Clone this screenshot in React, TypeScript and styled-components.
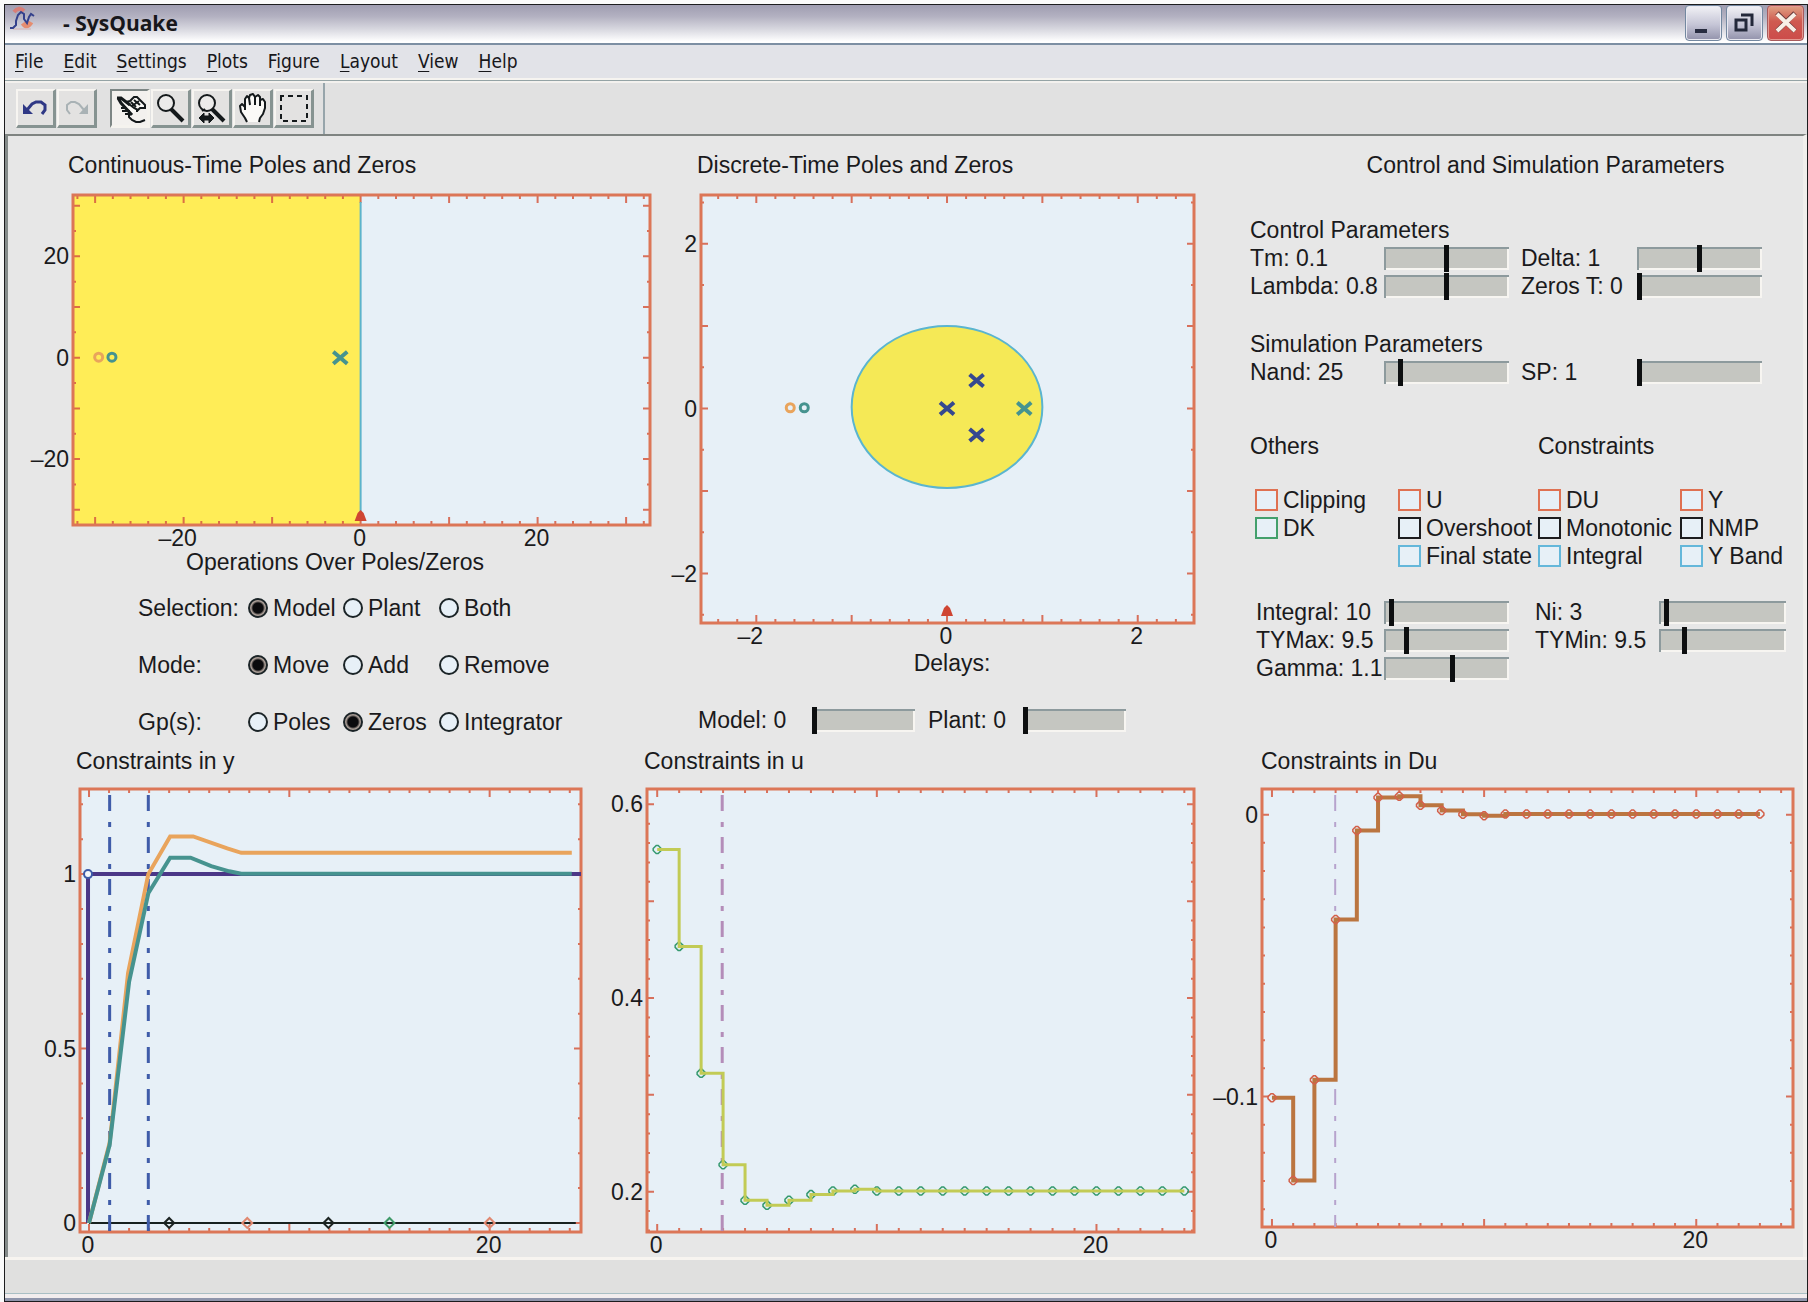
import React from "react";
import styled, { createGlobalStyle, css } from "styled-components";

const color = {
  ink: "#1a1a1c",
  canvas: "#e7e7e7",
  plot: "#e7f0f7",
  frame: "#dc7657",
  tick: "#d65a40",
  teal: "#46938f",
  orange: "#e9a45c",
  navy: "#35488f",
  red: "#cf4532",
};

const GlobalStyle = createGlobalStyle`
  * { box-sizing: border-box; }
  body {
    margin: 0;
    background: #fafafa;
    color: ${color.ink};
    font-family: "Liberation Sans", Arial, sans-serif;
    font-size: 23px;
    line-height: 28px;
  }
`;

/* ---------- window chrome ---------- */

const Window = styled.div`
  display: flex;
  flex-direction: column;
  min-height: calc(100vh - 4px);
  margin: 4px 0 0 4px;
  border: 1px solid #1c1c1e;
  background: ${color.canvas};
`;

const TitleBar = styled.header`
  display: flex;
  align-items: flex-start;
  height: 40px;
  padding: 0 3px 0 4px;
  border-bottom: 2px solid #7d8fa3;
  background: linear-gradient(#9f9db1 0%, #b3b1c1 30%, #d6d6de 62%, #ffffff 96%);
`;

const WindowTitle = styled.h1`
  flex: 1;
  margin: 4px 0 0 28px;
  font: bold 21px/28px "Open Sans", "Noto Sans", sans-serif;
  color: #17171b;
`;

const WindowButtons = styled.div`
  display: flex;
  gap: 4px;
`;

const WindowButton = styled.button<{ $close?: boolean }>`
  display: grid;
  place-items: center;
  width: 37px;
  height: 36px;
  padding: 0;
  border: 1px solid ${(p) => (p.$close ? "#a85a5c" : "#7388a0")};
  border-radius: 4px;
  box-shadow: inset 0 0 0 1px ${(p) => (p.$close ? "#e49a92" : "#e9e9f1")};
  background: ${(p) =>
    p.$close
      ? "linear-gradient(#e0a184, #cf5a50 45%, #cc4c4a)"
      : "linear-gradient(#f2f2f6, #c5c5d6 55%, #9292ab)"};
`;

const MenuBar = styled.nav`
  display: flex;
  gap: 20px;
  height: 38px;
  padding: 2px 10px 0;
  border-bottom: 2px solid #f3f1ee;
  box-shadow: inset 0 -1px #94a3a5, inset 0 -3px #f6f4f0;
  background: #e2e3e8;
`;

const MenuItem = styled.button`
  padding: 0;
  border: 0;
  background: none;
  color: #17171b;
  font: 19px/28px "DejaVu Sans Condensed", "DejaVu Sans", sans-serif;
  align-self: flex-start;

  u { text-underline-offset: 3px; }
`;

const ToolBar = styled.div`
  display: flex;
  align-items: center;
  gap: 13px;
  height: 51px;
  padding-left: 11px;
  background: #e1e1e1;
`;

const ToolGroup = styled.div<{ $divided?: boolean }>`
  display: flex;
  align-items: center;
  align-self: stretch;
  gap: 1px;
  ${(p) => p.$divided && css`
    padding-right: 9px;
    border-right: 2px solid #97a5ab;
  `}
`;

const ToolButton = styled.button<{ $pressed?: boolean }>`
  width: 40px;
  height: 39px;
  padding: 0;
  border: solid;
  border-width: 2px 3px 3px 2px;
  border-color: ${(p) =>
    p.$pressed ? "#7d8684 #f5f3ee #f5f3ee #7d8684" : "#f7f5f1 #869391 #869391 #f7f5f1"};
  background: ${(p) => (p.$pressed ? "#f3f1ee" : "#e3e2e1")};

  svg { display: block; }
`;

const Canvas = styled.main`
  flex: 1;
  padding-top: 15px;
  border-style: solid;
  border-width: 2px 4px 0 3px;
  border-color: #7f8481 #f1efec #f1efec #858b8a;
`;

const StatusBar = styled.footer`
  height: 36px;
  border-top: 3px solid #f7f4f0;
  background: #e0e0df;
`;

const WindowEdge = styled.div`
  height: 8px;
  border-top: 1px solid #a9bfc4;
  border-bottom: 3px solid #8f95ab;
  background: #f2edee;
`;

/* ---------- layout of the figures ---------- */

const UpperRow = styled.div`
  display: grid;
  grid-template-columns: minmax(0, 654fr) minmax(0, 580fr) minmax(0, 561fr);
`;

const LowerRow = styled.div`
  display: grid;
  grid-template-columns: minmax(0, 584fr) minmax(0, 614fr) minmax(0, 597fr);
  margin-top: 11px;
`;

const Title = styled.h2<{ $indent?: number }>`
  margin: 0 0 0 ${(p) => p.$indent ?? 0}px;
  font-size: 23px;
  font-weight: normal;
`;

const CenterTitle = styled(Title)`
  text-align: center;
`;

const Plot = styled.svg`
  display: block;
  width: 100%;
  height: auto;
  overflow: visible;
  font-family: "Liberation Sans", Arial, sans-serif;
  font-size: 23px;
  fill: ${color.ink};
`;

/* ---------- form controls ---------- */

const RadioRows = styled.div`
  display: grid;
  gap: 29px;
  padding: 18px 0 0 130px;
`;

const RadioRow = styled.div`
  display: grid;
  grid-template-columns: 110px 95px 96px 1fr;
  white-space: nowrap;
`;

const RadioOption = styled.label`
  display: flex;
  align-items: center;
  gap: 5px;
`;

const Radio = styled.input`
  appearance: none;
  width: 20px;
  height: 20px;
  margin: 0;
  border: 2px solid #1b2427;
  border-radius: 50%;
  background: ${color.plot};

  &:checked { background: radial-gradient(circle, #0b0b0d 5px, #a89c95 7px); }
`;

const DelayRow = styled.div`
  display: grid;
  grid-template-columns: 114fr 103fr 108fr 103fr 116fr;
  align-items: center;
  padding: 29px 0 0 36px;
`;

const Panel = styled.section`
  padding-left: 8px;
`;

const PanelTitle = styled(CenterTitle)`
  padding-left: 38px;
  margin-bottom: 37px;
`;

const ParamGrid = styled.div<{ $wide?: boolean; $after: number }>`
  display: grid;
  grid-template-columns: ${(p) =>
    p.$wide ? "134fr 125fr 150fr 127fr 17fr" : "134fr 125fr 128fr 125fr 41fr"};
  grid-auto-rows: 28px;
  align-items: center;
  margin-bottom: ${(p) => p.$after}px;
`;

const FieldLabel = styled.label<{ $inset?: number; $col?: number }>`
  padding-left: ${(p) => p.$inset ?? 0}px;
  grid-column: ${(p) => p.$col ?? "auto"};
  white-space: nowrap;
`;

const Range = styled.input`
  appearance: none;
  width: 100%;
  height: 27px;
  margin: 0;
  background: none;

  &::-webkit-slider-runnable-track {
    height: 23px;
    box-shadow: inset 2px 2px #8d9a9d, inset -2px -2px #f7f5f1;
    background: #c5c6c1;
  }
  &::-webkit-slider-thumb {
    appearance: none;
    width: 5px;
    height: 27px;
    margin-top: -2px;
    background: #0d0f10;
  }
`;

const GroupHeads = styled.div`
  display: grid;
  grid-template-columns: 288fr 265fr;
  margin-bottom: 26px;
`;

const CheckGrid = styled.div`
  display: grid;
  grid-template-columns: 143fr 140fr 142fr 123fr;
  grid-auto-rows: 28px;
  padding-left: 5px;
  margin-bottom: 28px;
`;

const CheckOption = styled.label<{ $col: number; $row: number }>`
  grid-column: ${(p) => p.$col};
  grid-row: ${(p) => p.$row};
  display: flex;
  align-items: center;
  gap: 5px;
  white-space: nowrap;
`;

const Check = styled.input<{ $tone: string }>`
  appearance: none;
  flex: none;
  width: 23px;
  height: 22px;
  margin: 0;
  border: 2px solid ${(p) => p.$tone};
  background: ${color.plot};

  &:checked { background: ${(p) => p.$tone}; }
`;

/* ---------- charts ---------- */

type Range2 = [number, number];
type Scale = { x: (v: number) => number; y: (v: number) => number; left: number; right: number; top: number; bottom: number };

interface ChartProps {
  name: string;
  size: [number, number];
  box: [number, number, number, number];
  xDomain: Range2;
  yDomain: Range2;
  xStep: number;
  xMajor: number;
  yStep: number;
  yMajor: number;
  xLabels: number[];
  yLabels: number[];
  shadeNegative?: boolean;
  children: (s: Scale) => React.ReactNode;
}

const format = (v: number) => String(v).replace("-", "–");

const ticksFor = ([lo, hi]: Range2, step: number, major: number) => {
  const list: { v: number; big: boolean }[] = [];
  const every = Math.round(major / step);
  for (let i = Math.ceil(lo / step); i * step <= hi; i++) {
    list.push({ v: i * step, big: i % every === 0 });
  }
  return list;
};

function Chart(p: ChartProps) {
  const [left, top, right, bottom] = p.box;
  const [x0, x1] = p.xDomain;
  const [y0, y1] = p.yDomain;
  const s: Scale = {
    left, top, right, bottom,
    x: (v) => left + ((v - x0) / (x1 - x0)) * (right - left),
    y: (v) => bottom - ((v - y0) / (y1 - y0)) * (bottom - top),
  };
  const tickPath = [
    ...ticksFor(p.xDomain, p.xStep, p.xMajor).map(({ v, big }) => {
      const n = big ? 8 : 4;
      return `M${s.x(v)} ${top}v${n}M${s.x(v)} ${bottom}v${-n}`;
    }),
    ...ticksFor(p.yDomain, p.yStep, p.yMajor).map(({ v, big }) => {
      const n = big ? 7 : 3;
      return `M${left} ${s.y(v)}h${n}M${right} ${s.y(v)}h${-n}`;
    }),
  ].join("");
  return (
    <Plot viewBox={`0 0 ${p.size[0]} ${p.size[1]}`} role="img" aria-label={p.name}>
      <rect x={left} y={top} width={right - left} height={bottom - top} fill={color.plot} />
      {p.shadeNegative && (
        <rect x={left} y={top} width={s.x(0) - left} height={bottom - top} fill="#ffed57" />
      )}
      <path d={tickPath} stroke={color.tick} strokeWidth="2" opacity="0.85" />
      <rect x={left} y={top} width={right - left} height={bottom - top} fill="none" stroke={color.frame} strokeWidth="3" />
      {p.children(s)}
      {p.xLabels.map((v) => (
        <text key={v} x={s.x(v) - (v < 0 ? 6 : 1)} y={bottom + 21} textAnchor="middle">{format(v)}</text>
      ))}
      {p.yLabels.map((v) => (
        <text key={v} x={left - 4} y={s.y(v) + 8} textAnchor="end">{format(v)}</text>
      ))}
    </Plot>
  );
}

const Cross = ({ x, y, tone }: { x: number; y: number; tone: string }) => (
  <path d={`M${x - 7} ${y - 6}L${x + 7} ${y + 6}M${x - 7} ${y + 6}L${x + 7} ${y - 6}`} stroke={tone} strokeWidth="4" />
);

const Ring = ({ x, y, tone }: { x: number; y: number; tone: string }) => (
  <ellipse cx={x} cy={y} rx="4" ry="4" fill="none" stroke={tone} strokeWidth="3" />
);

const Diamond = ({ x, y, tone }: { x: number; y: number; tone: string }) => (
  <path d={`M${x - 5} ${y}L${x} ${y - 5}L${x + 5} ${y}L${x} ${y + 5}Z`} fill="none" stroke={tone} strokeWidth="2" />
);

const Marker = ({ x, y }: { x: number; y: number }) => (
  <path d={`M${x - 6} ${y + 5}L${x - 3} ${y - 3}L${x} ${y - 6}L${x + 3} ${y - 3}L${x + 6} ${y + 5}Z`} fill={color.red} />
);

/* Sampled points of the step curves: a small eight-sided dot outline. */
const Sample = ({ x, y, tone }: { x: number; y: number; tone: string }) => (
  <path
    d={`M${x - 4} ${y - 1}L${x - 1} ${y - 4}H${x + 1}L${x + 4} ${y - 1}V${y + 1}L${x + 1} ${y + 4}H${x - 1}L${x - 4} ${y + 1}Z`}
    stroke={tone}
    strokeWidth="1.5"
  />
);

const DashDot = ({ s, at, tone, width }: { s: Scale; at: number; tone: string; width: number }) => (
  <path d={`M${s.x(at)} ${s.top + 6}V${s.bottom}`} stroke={tone} strokeWidth={width} strokeDasharray="16 11 5 10" />
);

const line = (s: Scale, pts: number[][]) => "M" + pts.map(([x, y]) => `${s.x(x)} ${s.y(y)}`).join("L");

const stairs = (s: Scale, values: number[]) =>
  values.map((v, i) => (i === 0 ? `M${s.x(0)} ${s.y(v)}` : `H${s.x(i)}V${s.y(v)}`)).join("");

const uValues = [0.5533, 0.4533, 0.3222, 0.2278, 0.1911, 0.1859, 0.1911, 0.197, 0.2007, 0.2026, ...Array(15).fill(0.2007)];
const duValues = [-0.1004, -0.1298, -0.0941, -0.0372, -0.0056, 0.0061, 0.0065, 0.0033, 0.0015, 0.0001, -0.0004, ...Array(13).fill(0.0002)];

const modelOutput = [[0, 0], [1.03, 0.224], [2, 0.691], [2.96, 0.945], [4.05, 1.047], [5.07, 1.047], [6.1, 1.023], [7, 1.008], [7.6, 1.001], [24.1, 1.001]];
const plantOutput = [[0, 0], [1.03, 0.23], [1.95, 0.716], [2.96, 1], [4.05, 1.108], [5.2, 1.108], [6.9, 1.074], [7.6, 1.061], [24.1, 1.061]];

/* ---------- drawings on the buttons ---------- */

const AppIcon = () => (
  <svg width="26" height="26" viewBox="0 0 26 26" fill="none">
    <path d="M5 7Q10 1 15 6" stroke="#d87f78" strokeWidth="4" />
    <path d="M14 18Q18 24 22 17" stroke="#e58d70" strokeWidth="5" />
    <path d="M4 24H22" stroke="#d3b3b3" strokeWidth="1" />
    <path d="M1 23H4L7 20V16L9 10L12 7L15 9V14L18 18L20 12L22 9L25 11" stroke="#34418c" strokeWidth="2" />
  </svg>
);

const Undo = () => (
  <svg width="35" height="34" viewBox="0 0 35 34" fill="none">
    <path d="M5 13V23H15Z" fill="#2f3885" />
    <path d="M9 19L14 13L18 11H23L27 14V19L24 23" stroke="#2f3885" strokeWidth="3" />
  </svg>
);

const Redo = () => (
  <svg width="35" height="34" viewBox="0 0 35 34" fill="none">
    <path d="M29 13V23H20Z" fill="#a9b2b5" />
    <path d="M25 19L20 13L16 11H12L8 14V19L11 23" stroke="#a9b2b5" strokeWidth="2" />
  </svg>
);

const Pointing = () => (
  <svg width="35" height="34" viewBox="0 0 35 34" fill="none" stroke="#14191b" strokeWidth="2">
    <path d="M5 6L10 7L16 12L22 7L27 8L33 14V17H29L25 21L23 20L20 25L8 12Z" fill="#fbfaf7" stroke="none" />
    <path d="M5 7H9L18 14M6 7L9 12L20 24" strokeWidth="3" />
    <path d="M14 11L18 10L22 6H25L28 9L33 14V17H28L26 19L22 17L17 13" />
    <path d="M19 11L24 16M22 9L28 14M20 15L27 10" />
    <path d="M9 17H13M10 20H18M13 23H17V26L20 29L24 31H28L33 29" />
    <path d="M25 19V21" />
  </svg>
);

const Magnifier = ({ arrows }: { arrows?: boolean }) => (
  <svg width="35" height="34" viewBox="0 0 35 34" fill="none" stroke="#14191b">
    <circle cx="13" cy="12" r="8" strokeWidth="2" fill="#ecebea" />
    <path d="M18 18L30 30" strokeWidth="4" />
    {arrows && <path d="M5 27L10 22V25H15V22L20 27L15 32V29H10V32Z" fill="#14191b" />}
    {arrows && <path d="M8 20L11 18" strokeWidth="2" />}
  </svg>
);

const OpenHand = () => (
  <svg width="35" height="34" viewBox="0 0 35 34" fill="none" stroke="#14191b" strokeWidth="2" strokeLinejoin="round">
    <path
      d="M12 31L10 27L6 21L5 15L7 13L10 16V8L12 5L14 7L15 4L18 3L20 6L23 4L25 6V9L28 8L30 11V17L28 23L25 27L24 31"
      fill="#fbfaf7"
    />
    <path d="M14 7L15 14M20 6V14M25 9V15M10 16V19" />
  </svg>
);

const Marquee = () => (
  <svg width="35" height="34" viewBox="0 0 35 34" fill="none" stroke="#14191b" strokeWidth="2">
    <rect x="5" y="5" width="26" height="25" strokeDasharray="5 4" strokeDashoffset="2" />
  </svg>
);

/* ---------- data of the menus and forms ---------- */

const menus: [string, string, string][] = [
  ["", "F", "ile"], ["", "E", "dit"], ["", "S", "ettings"], ["", "P", "lots"],
  ["F", "i", "gure"], ["", "L", "ayout"], ["", "V", "iew"], ["", "H", "elp"],
];

const radioGroups = [
  { label: "Selection:", options: ["Model", "Plant", "Both"], on: 0 },
  { label: "Mode:", options: ["Move", "Add", "Remove"], on: 0 },
  { label: "Gp(s):", options: ["Poles", "Zeros", "Integrator"], on: 1 },
];

const checks = [
  { label: "Clipping", tone: "#df7152", col: 1, row: 1 },
  { label: "U", tone: "#df7152", col: 2, row: 1 },
  { label: "DU", tone: "#df7152", col: 3, row: 1 },
  { label: "Y", tone: "#df7152", col: 4, row: 1 },
  { label: "DK", tone: "#43a06c", col: 1, row: 2 },
  { label: "Overshoot", tone: "#1c1c1e", col: 2, row: 2 },
  { label: "Monotonic", tone: "#1c1c1e", col: 3, row: 2 },
  { label: "NMP", tone: "#1c1c1e", col: 4, row: 2 },
  { label: "Final state", tone: "#64b7da", col: 2, row: 3 },
  { label: "Integral", tone: "#64b7da", col: 3, row: 3 },
  { label: "Y Band", tone: "#64b7da", col: 4, row: 3 },
];

function Slider({ id, label, at, inset, col }: { id: string; label: string; at: number; inset?: number; col?: number }) {
  return (
    <>
      <FieldLabel htmlFor={id} $inset={inset} $col={col}>{label}</FieldLabel>
      <Range id={id} type="range" min={0} max={100} defaultValue={at} />
    </>
  );
}

export default function App() {
  return (
    <>
      <GlobalStyle />
      <Window>
        <TitleBar>
          <AppIcon />
          <WindowTitle>- SysQuake</WindowTitle>
          <WindowButtons>
            <WindowButton aria-label="Minimize">
              <svg width="24" height="24" viewBox="0 0 24 24"><path d="M3 18H15V22H3Z" fill="#282c40" /></svg>
            </WindowButton>
            <WindowButton aria-label="Restore">
              <svg width="24" height="24" viewBox="0 0 24 24" fill="none" stroke="#23283a" strokeWidth="3">
                <path d="M3 9H13V19H3Z M8 4H19V15" />
              </svg>
            </WindowButton>
            <WindowButton $close aria-label="Close">
              <svg width="26" height="26" viewBox="0 0 26 26">
                <path d="M4 3L22 21M22 3L4 21" stroke="#6b3a3a" strokeWidth="5" />
                <path d="M4 4L22 21M22 4L4 21" stroke="#f8efe6" strokeWidth="4" />
              </svg>
            </WindowButton>
          </WindowButtons>
        </TitleBar>

        <MenuBar aria-label="Main menu">
          {menus.map(([before, key, after]) => (
            <MenuItem key={before + key + after}>{before}<u>{key}</u>{after}</MenuItem>
          ))}
        </MenuBar>

        <ToolBar>
          <ToolGroup>
            <ToolButton aria-label="Undo"><Undo /></ToolButton>
            <ToolButton aria-label="Redo"><Redo /></ToolButton>
          </ToolGroup>
          <ToolGroup $divided>
            <ToolButton $pressed aria-label="Manipulate"><Pointing /></ToolButton>
            <ToolButton aria-label="Zoom"><Magnifier /></ToolButton>
            <ToolButton aria-label="Zoom horizontally"><Magnifier arrows /></ToolButton>
            <ToolButton aria-label="Drag"><OpenHand /></ToolButton>
            <ToolButton aria-label="Select area"><Marquee /></ToolButton>
          </ToolGroup>
        </ToolBar>

        <Canvas>
          <UpperRow>
            <section>
              <Title $indent={60}>Continuous-Time Poles and Zeros</Title>
              <Chart
                name="Continuous-Time Poles and Zeros" size={[654, 369]} box={[65, 16, 642, 346]}
                xDomain={[-32.5, 32.7]} yDomain={[-33, 32.1]}
                xStep={2} xMajor={10} yStep={5} yMajor={10}
                xLabels={[-20, 0, 20]} yLabels={[20, 0, -20]}
                shadeNegative
              >
                {(s) => (
                  <>
                    <path d={`M${s.x(0)} ${s.top + 7}V${s.bottom - 8}`} stroke="#5db4cb" strokeWidth="2" />
                    <Marker x={s.x(0)} y={s.bottom - 9} />
                    <Ring x={s.x(-29.6)} y={s.y(0.1)} tone={color.orange} />
                    <Ring x={s.x(-28.1)} y={s.y(0.1)} tone={color.teal} />
                    <Cross x={s.x(-2.3)} y={s.y(0)} tone={color.teal} />
                  </>
                )}
              </Chart>
              <CenterTitle>Operations Over Poles/Zeros</CenterTitle>
              <RadioRows>
                {radioGroups.map((g) => (
                  <RadioRow key={g.label} role="radiogroup" aria-label={g.label}>
                    <span>{g.label}</span>
                    {g.options.map((o, i) => (
                      <RadioOption key={o}>
                        <Radio type="radio" name={g.label} defaultChecked={i === g.on} />
                        {o}
                      </RadioOption>
                    ))}
                  </RadioRow>
                ))}
              </RadioRows>
            </section>

            <section>
              <Title $indent={35}>Discrete-Time Poles and Zeros</Title>
              <Chart
                name="Discrete-Time Poles and Zeros" size={[580, 470]} box={[39, 16, 532, 444]}
                xDomain={[-2.58, 2.59]} yDomain={[-2.6, 2.59]}
                xStep={0.2} xMajor={1} yStep={0.5} yMajor={1}
                xLabels={[-2, 0, 2]} yLabels={[2, 0, -2]}
              >
                {(s) => (
                  <>
                    <ellipse cx={s.x(0)} cy={s.y(0.02)} rx={s.x(1) - s.x(0)} ry={81} fill="#f5e956" stroke="#5bb5cf" strokeWidth="2" />
                    <Marker x={s.x(0)} y={s.bottom - 12} />
                    <Ring x={s.x(-1.644)} y={s.y(0.01)} tone={color.orange} />
                    <Ring x={s.x(-1.497)} y={s.y(0.01)} tone={color.teal} />
                    <Cross x={s.x(0)} y={s.y(0)} tone={color.navy} />
                    <Cross x={s.x(0.31)} y={s.y(0.34)} tone={color.navy} />
                    <Cross x={s.x(0.31)} y={s.y(-0.32)} tone={color.navy} />
                    <Cross x={s.x(0.81)} y={s.y(0)} tone={color.teal} />
                  </>
                )}
              </Chart>
              <CenterTitle>Delays:</CenterTitle>
              <DelayRow>
                <Slider id="delay-model" label="Model: 0" at={0} />
                <Slider id="delay-plant" label="Plant: 0" at={0} inset={13} />
              </DelayRow>
            </section>

            <Panel>
              <PanelTitle>Control and Simulation Parameters</PanelTitle>
              <Title>Control Parameters</Title>
              <ParamGrid $after={30}>
                <Slider id="tm" label="Tm: 0.1" at={50} />
                <Slider id="delta" label="Delta: 1" at={50} inset={12} />
                <Slider id="lambda" label="Lambda: 0.8" at={50} col={1} />
                <Slider id="zeros-t" label="Zeros T: 0" at={0} inset={12} />
              </ParamGrid>
              <Title>Simulation Parameters</Title>
              <ParamGrid $after={46}>
                <Slider id="nand" label="Nand: 25" at={12} />
                <Slider id="sp" label="SP: 1" at={0} inset={12} />
              </ParamGrid>
              <GroupHeads>
                <Title>Others</Title>
                <Title>Constraints</Title>
              </GroupHeads>
              <CheckGrid>
                {checks.map((c) => (
                  <CheckOption key={c.label} $col={c.col} $row={c.row}>
                    <Check type="checkbox" $tone={c.tone} />
                    {c.label}
                  </CheckOption>
                ))}
              </CheckGrid>
              <ParamGrid $wide $after={0}>
                <Slider id="integral" label="Integral: 10" at={4} inset={6} />
                <Slider id="ni" label="Ni: 3" at={4} inset={26} />
                <Slider id="tymax" label="TYMax: 9.5" at={17} inset={6} col={1} />
                <Slider id="tymin" label="TYMin: 9.5" at={19} inset={26} />
                <Slider id="gamma" label="Gamma: 1.1" at={55} inset={6} col={1} />
              </ParamGrid>
            </Panel>
          </UpperRow>

          <LowerRow>
            <section>
              <Title $indent={68}>Constraints in y</Title>
              <Chart
                name="Constraints in y" size={[584, 482]} box={[72, 14, 573, 457]}
                xDomain={[-0.45, 24.56]} yDomain={[-0.026, 1.244]}
                xStep={1} xMajor={10} yStep={0.1} yMajor={0.5}
                xLabels={[0, 20]} yLabels={[1, 0.5, 0]}
              >
                {(s) => (
                  <g fill="none">
                    <path d={`M${s.x(0) - 1} ${s.y(0)}V${s.y(1)}H${s.right}`} stroke="#4b3787" strokeWidth="4" />
                    <circle cx={s.x(0) - 1} cy={s.y(1)} r="4" fill="#f3f6fa" stroke="#3d5aa8" strokeWidth="2" />
                    <path d={`M${s.x(0)} ${s.y(0)}H${s.x(24.3)}`} stroke="#17211f" strokeWidth="2" />
                    <DashDot s={s} at={1.03} tone="#3f5ca9" width={3} />
                    <DashDot s={s} at={2.96} tone="#3f5ca9" width={3} />
                    <path d={line(s, plantOutput)} stroke={color.orange} strokeWidth="4" />
                    <path d={line(s, modelOutput)} stroke={color.teal} strokeWidth="4" />
                    <Diamond x={s.x(4)} y={s.y(0)} tone="#1c2422" />
                    <Diamond x={s.x(7.9)} y={s.y(0)} tone="#e08870" />
                    <Diamond x={s.x(11.95)} y={s.y(0)} tone="#1c2422" />
                    <Diamond x={s.x(15)} y={s.y(0)} tone="#3f9a68" />
                    <Diamond x={s.x(20)} y={s.y(0)} tone="#e08870" />
                  </g>
                )}
              </Chart>
            </section>
            <section>
              <Title $indent={52}>Constraints in u</Title>
              <Chart
                name="Constraints in u" size={[614, 482]} box={[55, 14, 602, 457]}
                xDomain={[-0.464, 24.44]} yDomain={[0.1584, 0.6158]}
                xStep={1} xMajor={10} yStep={0.02} yMajor={0.1}
                xLabels={[0, 20]} yLabels={[0.6, 0.4, 0.2]}
              >
                {(s) => (
                  <g fill="none">
                    <DashDot s={s} at={2.96} tone="#b48db9" width={3} />
                    {uValues.map((v, i) => (
                      <Sample key={i} x={s.x(i)} y={s.y(v)} tone="#35996f" />
                    ))}
                    <path d={stairs(s, uValues)} stroke="#c2cb55" strokeWidth="3" />
                  </g>
                )}
              </Chart>
            </section>
            <section>
              <Title $indent={55}>Constraints in Du</Title>
              <Chart
                name="Constraints in Du" size={[597, 482]} box={[56, 14, 587, 452]}
                xDomain={[-0.47, 24.56]} yDomain={[-0.1463, 0.0091]}
                xStep={1} xMajor={10} yStep={0.01} yMajor={0.1}
                xLabels={[0, 20]} yLabels={[0, -0.1]}
              >
                {(s) => (
                  <g fill="none">
                    <DashDot s={s} at={2.98} tone="#b7a3cd" width={2} />
                    <path d={stairs(s, duValues)} stroke="#bb7540" strokeWidth="4" />
                    {duValues.map((v, i) => (
                      <Sample key={i} x={s.x(i)} y={s.y(v)} tone="#d3604a" />
                    ))}
                  </g>
                )}
              </Chart>
            </section>
          </LowerRow>
        </Canvas>
        <StatusBar />
        <WindowEdge />
      </Window>
    </>
  );
}
